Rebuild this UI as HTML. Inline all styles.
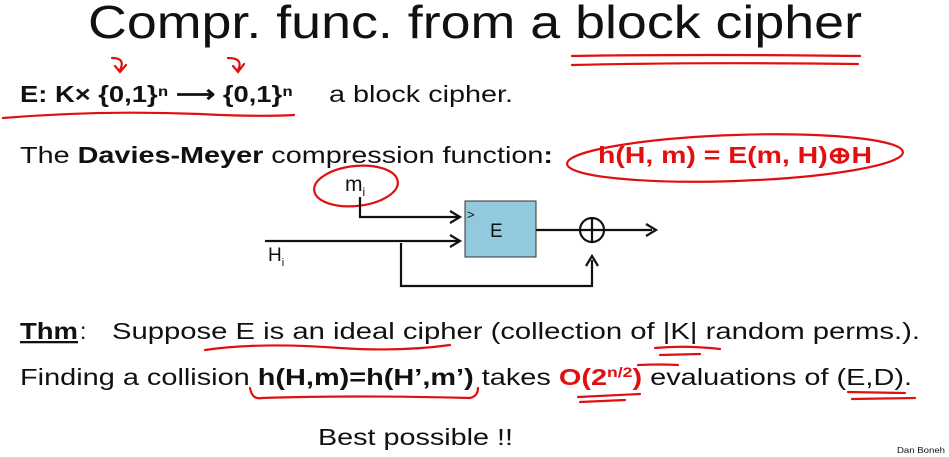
<!DOCTYPE html>
<html><head><style>
html,body{margin:0;padding:0;background:#fff;}
svg{display:block;}
text{font-family:"Liberation Sans",sans-serif;fill:#111;}
</style></head><body>
<svg width="949" height="457" viewBox="0 0 949 457" xmlns="http://www.w3.org/2000/svg">
<rect width="949" height="457" fill="#fff"/>
<text x="88" y="38" font-size="46" textLength="774" lengthAdjust="spacingAndGlyphs">Compr. func. from a block cipher</text>
<g fill="none" stroke="#e01010" stroke-width="2.2" stroke-linecap="round">
<path d="M572 56 Q700 54 860 56"/>
<path d="M572 65 Q700 62 858 64"/>
<path d="M112 58 Q126 58 120 70 M115 66 L120 72 L126 65"/>
<path d="M228 58 Q244 58 238 70 M233 66 L238 72 L244 64"/>
<path d="M3 118 Q100 110 200 114 Q260 117 294 115"/>
<ellipse cx="735" cy="158" rx="168" ry="23" transform="rotate(-2 735 158)"/>
<ellipse cx="356" cy="186" rx="42" ry="20" transform="rotate(-6 356 186)"/>
<path d="M205 350 Q260 342 340 348 Q400 352 450 345"/>
<path d="M655 348 Q685 345 720 349 M660 355 L700 354"/>
<path d="M250 388 Q252 400 262 398 Q350 395 470 398 Q478 396 478 388"/>
<path d="M578 397 L640 394 M580 402 L625 400 M638 365 Q660 364 678 365"/>
<path d="M848 392 L905 393 M852 399 L915 398"/>
</g>
<text x="20" y="102" font-size="23" font-weight="bold" textLength="273" lengthAdjust="spacingAndGlyphs">E: K× {0,1}ⁿ ⟶ {0,1}ⁿ</text>
<text x="329" y="102" font-size="23" textLength="184" lengthAdjust="spacingAndGlyphs">a block cipher.</text>
<text x="20" y="163" font-size="23" textLength="533" lengthAdjust="spacingAndGlyphs">The <tspan font-weight="bold">Davies-Meyer</tspan> compression function<tspan font-weight="bold">:</tspan></text>
<text x="598" y="163" font-size="23" font-weight="bold" style="fill:#e01010" textLength="274" lengthAdjust="spacingAndGlyphs">h(H, m) = E(m, H)⊕H</text>
<rect x="465" y="201" width="71" height="56" fill="#93c9dd" stroke="#333" stroke-width="1"/>
<text x="490" y="237" font-size="19">E</text>
<text x="467" y="219" font-size="13">&gt;</text>
<text x="345" y="191" font-size="21">m<tspan font-size="12" dy="5">i</tspan></text>
<text x="268" y="261" font-size="19">H<tspan font-size="11" dy="5">i</tspan></text>
<g fill="none" stroke="#111" stroke-width="2.2">
<path d="M360 197 V217 H458"/>
<path d="M265 241 H458"/>
<path d="M401 243 V286 H592 V260"/>
<path d="M536 230 H652"/>
<circle cx="592" cy="230" r="12"/>
<path d="M592 218 V242"/>
<path d="M450 211 L460 217 L450 223 M450 235 L460 241 L450 247 M586 266 L592 256 L598 266 M646 224 L656 230 L646 236"/>
</g>
<text x="20" y="339" font-size="23" font-weight="bold" text-decoration="underline" textLength="58" lengthAdjust="spacingAndGlyphs">Thm</text>
<text x="80" y="339" font-size="23">:</text>
<text x="112" y="339" font-size="23" textLength="808" lengthAdjust="spacingAndGlyphs">Suppose E is an ideal cipher (collection of |K| random perms.).</text>
<text x="20" y="385" font-size="23" textLength="892" lengthAdjust="spacingAndGlyphs">Finding a collision <tspan font-weight="bold">h(H,m)=h(H’,m’)</tspan>  takes <tspan font-weight="bold" style="fill:#e01010">O(2<tspan font-size="14" dy="-8">n/2</tspan><tspan dy="8">)</tspan></tspan> evaluations of (E,D).</text>
<text x="318" y="445" font-size="23" textLength="195" lengthAdjust="spacingAndGlyphs">Best possible !!</text>
<text x="897" y="453" font-size="8" textLength="48" lengthAdjust="spacingAndGlyphs">Dan Boneh</text>
</svg>
</body></html>
